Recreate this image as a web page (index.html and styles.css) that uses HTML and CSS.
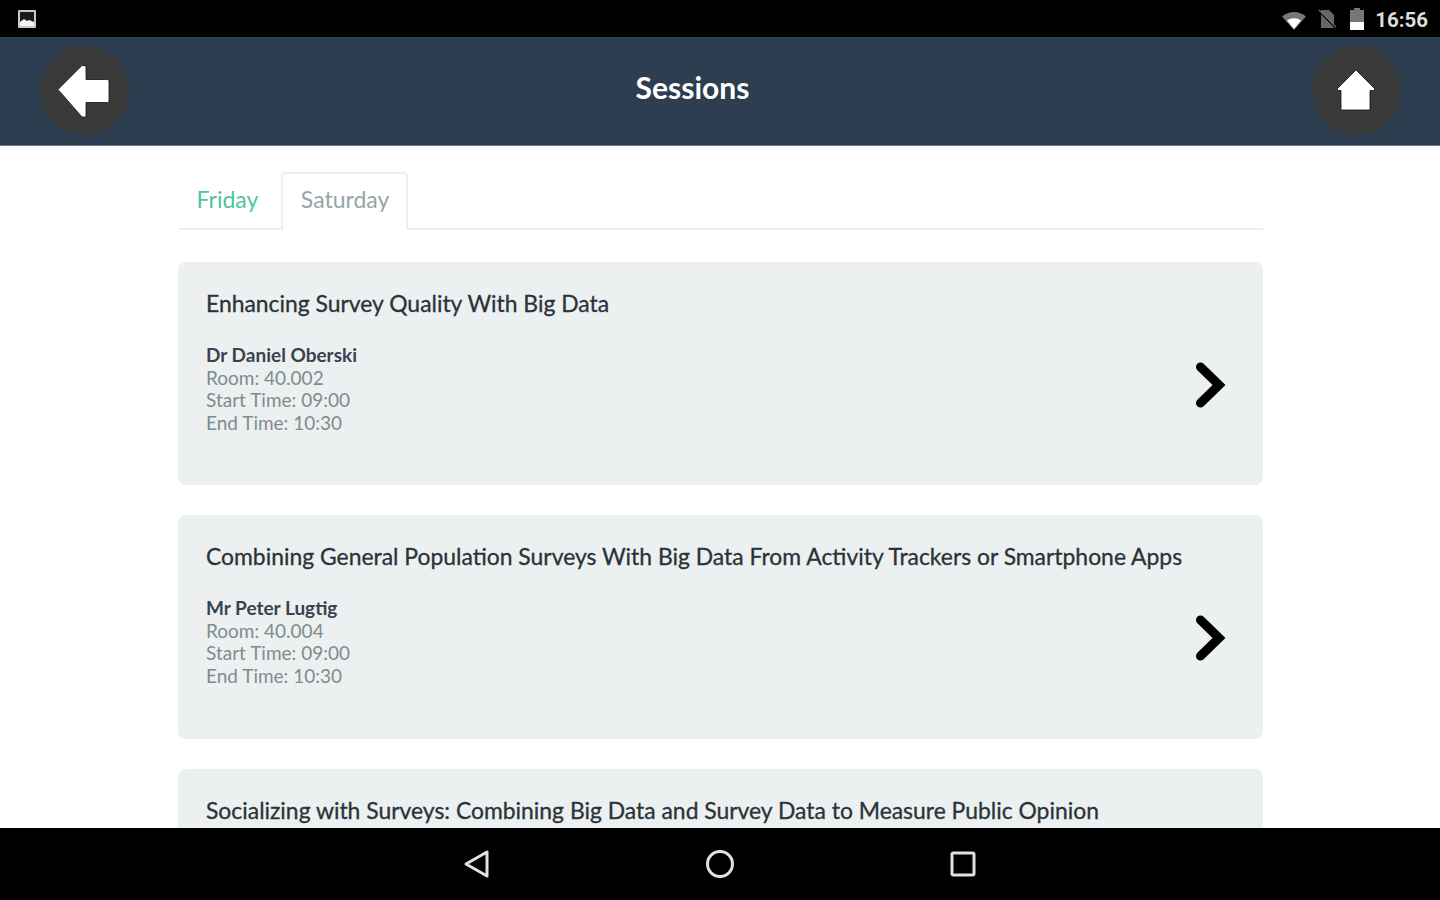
FILE: index.html
```html
<!DOCTYPE html>
<html lang="en">
<head>
    <meta charset="UTF-8">
    <title>Sessions</title>
    <link rel="stylesheet" href="styles.css">
</head>
<body>
    <div class="status-bar">
        <svg class="status-pic" width="22" height="22" viewBox="0 0 22 22">
            <rect x="2" y="2" width="18" height="18" rx="1" fill="#c9c9c9"/>
            <rect x="4" y="4" width="14" height="10" fill="#1a1a1a"/>
            <path d="M4 14l4-3 3 2 2-1 5 2v4H4z" fill="#f2f2f2"/>
        </svg>
        <div class="status-right">
            <svg class="status-wifi" width="26" height="20" viewBox="0 0 26 20">
                <path d="M1 6.500C8 .5 18 .5 25 6.500L13 20z" fill="#777"/>
                <path d="M6 10.500c4.500-3 9.500-3 14 0L13 19z" fill="#fff"/>
            </svg>
            <svg class="status-sim" width="20" height="20" viewBox="0 0 20 20">
                <path d="M4 1h8l5 5v13H4z" fill="#666"/>
                <path d="M1 1l18 18" stroke="#111" stroke-width="2"/>
                <path d="M2 1l17 17" stroke="#8a8a8a" stroke-width="1"/>
            </svg>
            <svg class="status-batt" width="16" height="24" viewBox="0 0 16 24">
                <path d="M5 1h6v2h4v20H1V3h4z" fill="#777"/>
                <rect x="1" y="15" width="14" height="8" fill="#fff"/>
            </svg>
            <span class="status-time">16:56</span>
        </div>
    </div>

    <header class="app-bar">
        <a class="round-btn">
            <svg width="54" height="54" viewBox="0 0 54 54">
                <path d="M0 25.500L24 1.500l4 .5v13.500h21.500a1.500 1.500 0 0 1 1.500 1.500v20a1.500 1.500 0 0 1-1.500 1.500H28V53h-4z" fill="#fff" stroke="#111" stroke-width=".8"/>
            </svg>
        </a>
        <h1>Sessions</h1>
        <a class="round-btn">
            <svg width="44" height="44" viewBox="0 0 44 44">
                <path d="M22 1L41 20l-1 1.500h-4V41H7V21.500H4L3 20z" fill="#fff" stroke="#111" stroke-width=".8"/>
            </svg>
        </a>
    </header>

    <main class="content">
        <div class="tabs">
            <a class="tab">Friday</a>
            <a class="tab active">Saturday</a>
        </div>

        <div class="session">
            <div class="session-info">
                <h2>Enhancing Survey Quality With Big Data</h2>
                <h3>Dr Daniel Oberski</h3>
                <p>Room: 40.002</p>
                <p>Start Time: 09:00</p>
                <p>End Time: 10:30</p>
            </div>
            <svg class="chevron" width="32" height="48" viewBox="0 0 32 48">
                <path d="M5.500 6L24 24 5.500 42" fill="none" stroke="#000" stroke-width="9" stroke-linecap="round"/>
            </svg>
        </div>

        <div class="session">
            <div class="session-info">
                <h2>Combining General Population Surveys With Big Data From Activity Trackers or Smartphone Apps</h2>
                <h3>Mr Peter Lugtig</h3>
                <p>Room: 40.004</p>
                <p>Start Time: 09:00</p>
                <p>End Time: 10:30</p>
            </div>
            <svg class="chevron" width="32" height="48" viewBox="0 0 32 48">
                <path d="M5.500 6L24 24 5.500 42" fill="none" stroke="#000" stroke-width="9" stroke-linecap="round"/>
            </svg>
        </div>

        <div class="session">
            <div class="session-info">
                <h2>Socializing with Surveys: Combining Big Data and Survey Data to Measure Public Opinion</h2>
            </div>
        </div>
    </main>

    <nav class="nav-bar">
        <svg width="28" height="30" viewBox="0 0 28 30">
            <path d="M24 3v24L3 15z" fill="none" stroke="#e0e0e0" stroke-width="3" stroke-linejoin="round"/>
        </svg>
        <svg width="30" height="30" viewBox="0 0 30 30">
            <circle cx="15" cy="15" r="12.500" fill="none" stroke="#e0e0e0" stroke-width="3"/>
        </svg>
        <svg width="26" height="26" viewBox="0 0 26 26">
            <rect x="2" y="2" width="22" height="22" rx="1.500" fill="none" stroke="#e0e0e0" stroke-width="3"/>
        </svg>
    </nav>
</body>
</html>
```

FILE: styles.css
```css
html, body {
    margin: 0;
    height: 100%;
}
body {
    width: 1440px;
    height: 900px;
    overflow: hidden;
    display: flex;
    flex-direction: column;
    font-family: 'Lato', 'Liberation Sans', sans-serif;
    background: #fff;
}
.status-bar {
    height: 37px;
    flex: none;
    background: #000;
    display: flex;
    align-items: center;
    justify-content: space-between;
    padding: 0 12px 0 16px;
}
.status-right {
    display: flex;
    align-items: center;
}
.status-wifi {
    margin-top: 2px;
}
.status-sim {
    margin-left: 10px;
}
.status-batt {
    margin-left: 12px;
}
.status-time {
    margin: 3px 0 0 10px;
    color: #ddd;
    font-size: 20.500px;
    font-weight: 700;
    font-family: 'Roboto', sans-serif;
}
.app-bar {
    height: 107px;
    flex: none;
    background: #2c3e50;
    border-bottom: 1px solid #6f7c89;
    display: flex;
    align-items: center;
    justify-content: space-between;
    padding: 0 39px 1px 40px;
}
.app-bar h1 {
    margin: 0 56px 8px 0;
    color: #fff;
    font-size: 30px;
    font-weight: 700;
}
.round-btn {
    width: 89px;
    height: 89px;
    border-radius: 50%;
    background: #3a3a3a;
    display: flex;
    align-items: center;
    justify-content: center;
}
.content {
    flex: 1;
    min-height: 0;
    overflow: hidden;
    padding: 26px 177px 0 178px;
}
.tabs {
    display: flex;
    height: 56px;
    border-bottom: 2px solid #ecf0f1;
    margin-bottom: 32px;
}
.tab {
    height: 56px;
    padding: 0 18.500px;
    margin-right: 4px;
    line-height: 55px;
    font-size: 23px;
    color: #4fc3a1;
    box-sizing: border-box;
}
.tab.active {
    height: 58px;
    padding: 0 17px 0 18px;
    color: #95a5a6;
    background: #fff;
    border: 2px solid #ecf0f1;
    border-bottom: none;
    border-radius: 4px 4px 0 0;
    line-height: 50px;
}
.session {
    height: 223.300px;
    margin-bottom: 30px;
    padding: 0 28px;
    box-sizing: border-box;
    background: #ecf0f1;
    border-radius: 8px;
    display: flex;
    align-items: center;
    justify-content: space-between;
}
.session-info {
    align-self: flex-start;
    padding-top: 26px;
}
.session h2 {
    margin: 0 0 25px;
    font-size: 22.900px;
    line-height: 30px;
    font-weight: 400;
    color: #2b3238;
    -webkit-text-stroke: .3px #2b3238;
}
.session h3 {
    margin: 0;
    font-size: 19px;
    line-height: 23.500px;
    font-weight: 700;
    color: #39434d;
}
.session p {
    margin: 0;
    font-size: 19px;
    line-height: 22.500px;
    color: #7f8c8d;
}
.chevron {
    margin-right: 8px;
    margin-top: 23px;
}
.nav-bar {
    height: 72px;
    flex: none;
    background: #000;
    display: grid;
    grid-template-columns: 1fr 1fr 1fr;
    place-items: center;
    padding: 0 356px;
}
```
